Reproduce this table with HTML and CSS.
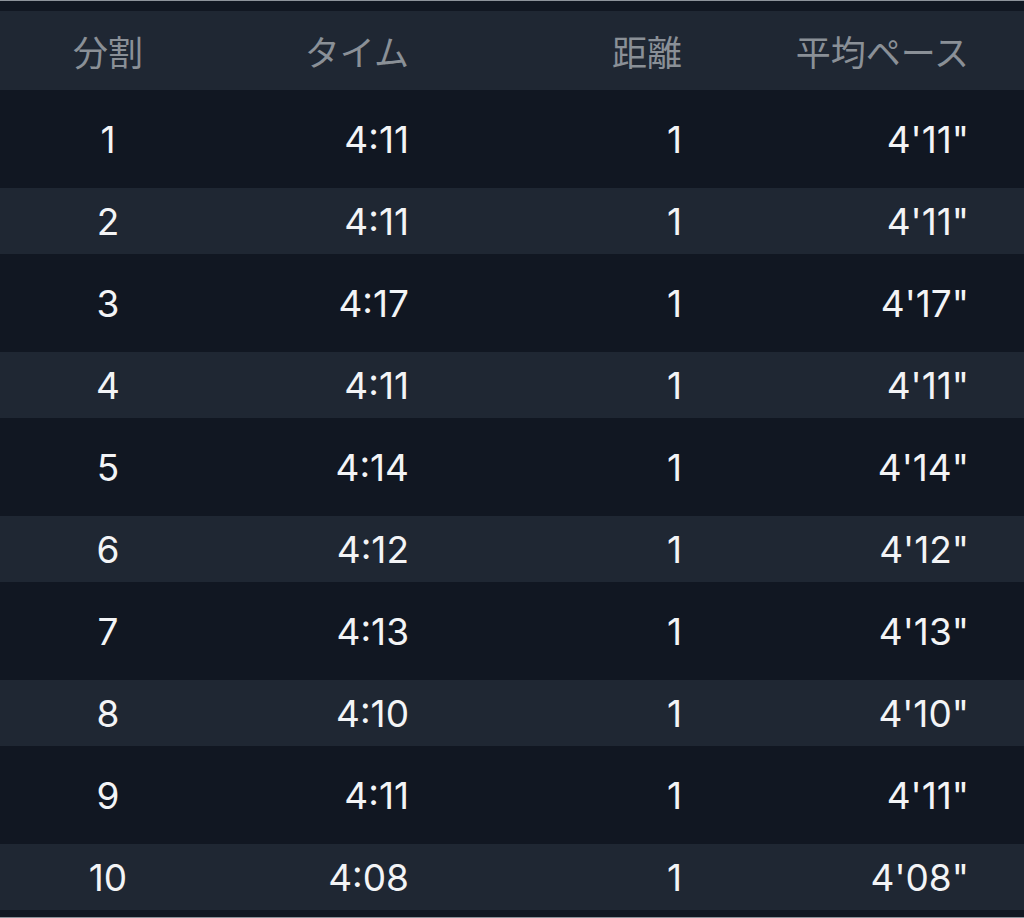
FILE: index.html
```html
<!DOCTYPE html>
<html lang="ja">
<head>
<meta charset="utf-8">
<title>分割</title>
<link rel="stylesheet" href="styles.css">
</head>
<body>
<div class="screen">
  <div class="edge"></div>
  <div class="gap"></div>
  <div class="row head">
    <div class="c1">分割</div>
    <div class="c2">タイム</div>
    <div class="c3">距離</div>
    <div class="c4">平均ペース</div>
  </div>
  <div class="row tall"><div class="c1">1</div><div class="c2">4:11</div><div class="c3">1</div><div class="c4">4'11"</div></div>
  <div class="row short"><div class="c1">2</div><div class="c2">4:11</div><div class="c3">1</div><div class="c4">4'11"</div></div>
  <div class="row tall"><div class="c1">3</div><div class="c2">4:17</div><div class="c3">1</div><div class="c4">4'17"</div></div>
  <div class="row short"><div class="c1">4</div><div class="c2">4:11</div><div class="c3">1</div><div class="c4">4'11"</div></div>
  <div class="row tall"><div class="c1">5</div><div class="c2">4:14</div><div class="c3">1</div><div class="c4">4'14"</div></div>
  <div class="row short"><div class="c1">6</div><div class="c2">4:12</div><div class="c3">1</div><div class="c4">4'12"</div></div>
  <div class="row tall"><div class="c1">7</div><div class="c2">4:13</div><div class="c3">1</div><div class="c4">4'13"</div></div>
  <div class="row short"><div class="c1">8</div><div class="c2">4:10</div><div class="c3">1</div><div class="c4">4'10"</div></div>
  <div class="row tall"><div class="c1">9</div><div class="c2">4:11</div><div class="c3">1</div><div class="c4">4'11"</div></div>
  <div class="row short"><div class="c1">10</div><div class="c2">4:08</div><div class="c3">1</div><div class="c4">4'08"</div></div>
  <div class="tail"></div>
  <div class="edge"></div>
</div>
</body>
</html>
```

FILE: styles.css
```css
html, body {
  margin: 0;
  padding: 0;
  background: #111722;
}
.screen {
  width: 1024px;
  height: 918px;
  overflow: hidden;
  display: flex;
  flex-direction: column;
  background: #111722;
}
.edge {
  height: 1px;
  background: #8d939b;
  flex: none;
}
.gap {
  height: 10px;
  flex: none;
}
.tail {
  height: 7px;
  flex: none;
}
.row {
  flex: none;
  display: grid;
  grid-template-columns: 216px 193px 273px 287px;
  align-items: center;
  font-family: "Inter", "Liberation Sans", "Noto Sans CJK JP", sans-serif;
  font-size: 37px;
  color: #f3f4f6;
  line-height: 1;
}
.head {
  height: 79px;
  background: #1f2733;
  font-family: "Noto Sans CJK JP", sans-serif;
  font-size: 35px;
  color: #8a9097;
}
.tall {
  height: 98px;
  background: #111722;
}
.short {
  height: 66px;
  background: #1f2733;
}
.c1 {
  text-align: center;
}
.c2, .c3, .c4 {
  text-align: right;
}
```
